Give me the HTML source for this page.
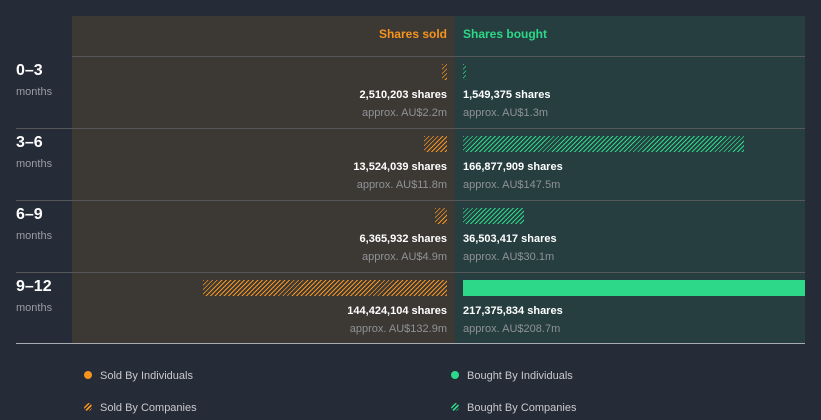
<!DOCTYPE html><html><head><style>
body{margin:0;width:821px;height:420px;background:#262b38;font-family:"Liberation Sans",sans-serif;position:relative;overflow:hidden}
div{position:absolute}
.sold{left:72px;top:16px;width:383px;height:327px;background:#3c3935}
.bought{left:455px;top:16px;width:350px;height:327px;background:#263e40}
.hl{left:16px;width:789px;height:1px;background:#55575a}
.lab{left:16px;color:#fff;font-weight:bold;font-size:16px}
.mo{left:16px;color:#9a9ca0;font-size:11px}
.sh{color:#fff;font-size:11px;font-weight:bold}
.ap{color:#8f9296;font-size:11px}
.r{right:374px;text-align:right}
.l{left:463px}
.hs{background:repeating-linear-gradient(135deg,#f7931e 0 1px,transparent 1px 3.2px);height:16px}
.hb{background:repeating-linear-gradient(135deg,#2dd888 0 1px,transparent 1px 3.2px);height:16px}
.lg{color:#c8cacd;font-size:11px}
</style></head><body>
<div class="sold"></div><div class="bought"></div>
<div style="right:374px;top:27px;color:#f7931e;font-weight:bold;font-size:12px">Shares sold</div>
<div style="left:463px;top:27px;color:#2dd888;font-weight:bold;font-size:12px">Shares bought</div>
<div class="hl" style="top:56px;left:72px;width:733px"></div>
<div class="hl" style="top:128px"></div><div class="hl" style="top:200px"></div><div class="hl" style="top:272px"></div>
<div class="hl" style="top:343px;background:#a8adb3"></div>

<div class="lab" style="top:62px">0–3</div><div class="mo" style="top:86px">months</div>
<div class="lab" style="top:134px">3–6</div><div class="mo" style="top:158px">months</div>
<div class="lab" style="top:206px">6–9</div><div class="mo" style="top:230px">months</div>
<div class="lab" style="top:278px">9–12</div><div class="mo" style="top:302px">months</div>

<div class="hs" style="left:442px;top:64px;width:5px"></div>
<div class="hb" style="left:463px;top:64px;width:3px"></div>
<div class="hs" style="left:424px;top:136px;width:23px"></div>
<div class="hb" style="left:463px;top:136px;width:281px"></div>
<div class="hs" style="left:435px;top:208px;width:12px"></div>
<div class="hb" style="left:463px;top:208px;width:61px"></div>
<div class="hs" style="left:203px;top:280px;width:244px"></div>
<div style="left:463px;top:280px;width:342px;height:16px;background:#2dd888"></div>

<div class="sh r" style="top:89px">2,510,203 shares</div><div class="ap r" style="top:107px">approx. AU$2.2m</div>
<div class="sh l" style="top:89px">1,549,375 shares</div><div class="ap l" style="top:107px">approx. AU$1.3m</div>
<div class="sh r" style="top:161px">13,524,039 shares</div><div class="ap r" style="top:179px">approx. AU$11.8m</div>
<div class="sh l" style="top:161px">166,877,909 shares</div><div class="ap l" style="top:179px">approx. AU$147.5m</div>
<div class="sh r" style="top:233px">6,365,932 shares</div><div class="ap r" style="top:251px">approx. AU$4.9m</div>
<div class="sh l" style="top:233px">36,503,417 shares</div><div class="ap l" style="top:251px">approx. AU$30.1m</div>
<div class="sh r" style="top:305px">144,424,104 shares</div><div class="ap r" style="top:323px">approx. AU$132.9m</div>
<div class="sh l" style="top:305px">217,375,834 shares</div><div class="ap l" style="top:323px">approx. AU$208.7m</div>

<div style="left:84px;top:371px;width:8px;height:8px;border-radius:50%;background:#f7931e"></div>
<div class="lg" style="left:100px;top:370px">Sold By Individuals</div>
<div style="left:84px;top:403px;width:8px;height:8px;border-radius:50%;background:repeating-linear-gradient(135deg,#f7931e 0 1.5px,transparent 1.5px 3px)"></div>
<div class="lg" style="left:100px;top:402px">Sold By Companies</div>
<div style="left:451px;top:371px;width:8px;height:8px;border-radius:50%;background:#2dd888"></div>
<div class="lg" style="left:467px;top:370px">Bought By Individuals</div>
<div style="left:451px;top:403px;width:8px;height:8px;border-radius:50%;background:repeating-linear-gradient(135deg,#2dd888 0 1.5px,transparent 1.5px 3px)"></div>
<div class="lg" style="left:467px;top:402px">Bought By Companies</div>
</body></html>
